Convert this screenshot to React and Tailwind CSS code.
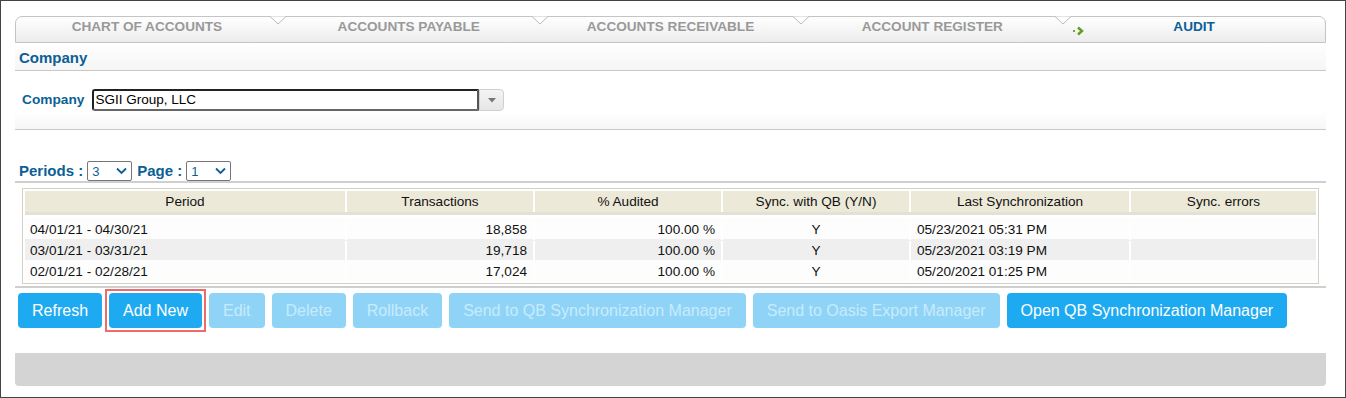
import React from 'react'

const TABS = ['Chart of Accounts', 'Accounts Payable', 'Accounts Receivable', 'Account Register', 'Audit']

const ROWS = [
  { period: '04/01/21 - 04/30/21', tx: '18,858', pct: '100.00 %', sync: 'Y', last: '05/23/2021 05:31 PM' },
  { period: '03/01/21 - 03/31/21', tx: '19,718', pct: '100.00 %', sync: 'Y', last: '05/23/2021 03:19 PM' },
  { period: '02/01/21 - 02/28/21', tx: '17,024', pct: '100.00 %', sync: 'Y', last: '05/20/2021 01:25 PM' },
]

const BUTTONS = [
  { label: 'Refresh', on: true },
  { label: 'Add New', on: true, marked: true },
  { label: 'Edit' },
  { label: 'Delete' },
  { label: 'Rollback' },
  { label: 'Send to QB Synchronization Manager' },
  { label: 'Send to Oasis Export Manager' },
  { label: 'Open QB Synchronization Manager', on: true },
]

const COLS = 'grid grid-cols-[320px_186px_186px_186px_218px_1fr] gap-x-[2px]'

function Notch() {
  // little V cut into the top edge between two tabs
  return (
    <svg className="absolute -right-[8px] -top-[1px]" width="16" height="10" viewBox="0 0 16 10">
      <path d="M0 0.5 L8 8 L16 0.5" fill="#ffffff" stroke="#b9b9b9" strokeWidth="1" />
    </svg>
  )
}

function Select({ value }) {
  return (
    <div className="w-[45px] h-[20px] border border-[#767676] rounded-[2px] bg-white flex items-center justify-between pl-[4px] pr-[4px] text-[13px] text-[#0b5f96]">
      <span className="mt-[2px]">{value}</span>
      <svg width="11" height="8" viewBox="0 0 11 8">
        <path d="M1 1.5 L5.5 6 L10 1.5" fill="none" stroke="#0b5f96" strokeWidth="1.8" />
      </svg>
    </div>
  )
}

export default function App() {
  return (
    <div className="w-[1346px] h-[398px] border border-[#444] bg-white box-border pl-[14px] pr-[19px] font-['Liberation_Sans',Arial,sans-serif]">
      {/* tab strip */}
      <div className="mt-[15px] h-[27px] flex border border-[#c4c4c4] rounded-t-[7px] bg-gradient-to-b from-white to-[#ececec]">
        {TABS.map((t, i) => {
          const last = i === TABS.length - 1
          return (
            <div key={t} className="relative flex-1 flex items-center justify-center pb-[4px]">
              {last && (
                <svg className="absolute left-[10px] top-[9px]" width="12" height="10" viewBox="0 0 12 10">
                  <rect x="0" y="4" width="2" height="2" fill="#6aa832" />
                  <path d="M5 1.5 L9 5 L5 8.5" fill="none" stroke="#5a9e22" strokeWidth="2.4" />
                </svg>
              )}
              <span className={`text-[13.6px] font-bold uppercase ${last ? 'text-[#0b5f96]' : 'text-[#999]'}`}>{t}</span>
              {!last && <Notch />}
            </div>
          )
        })}
      </div>

      {/* company section */}
      <div className="h-[28px] px-[4px] flex items-center border-b border-[#c8c8c8] bg-gradient-to-b from-white to-[#f5f5f5]">
        <span className="text-[15px] font-bold text-[#0b5f96] mt-[3px]">Company</span>
      </div>
      <div className="h-[59px] flex items-center pl-[7px] border-b border-[#c8c8c8] bg-gradient-to-b from-white from-70% to-[#f6f6f6]">
        <span className="text-[13.7px] font-bold text-[#0b5f96] mr-[8px]">Company</span>
        <div className="w-[387px] h-[22px] border-2 border-[#222] border-r-[#555] border-b-[#666] rounded-l-[3px] flex items-center pl-[1px] text-[13.5px] text-black">
          SGII Group, LLC
        </div>
        <div className="w-[25px] h-[22px] border border-[#d0d0d0] rounded-r-[4px] bg-gradient-to-b from-[#f4f4f4] to-[#e6e6e6] flex items-center justify-center">
          <svg width="8" height="5" viewBox="0 0 8 5"><path d="M0 0 L8 0 L4 4.5 Z" fill="#777" /></svg>
        </div>
      </div>

      {/* periods */}
      <div className="mt-[31px] h-[22px] flex items-center pl-[4px] gap-[4px] border-b-2 border-[#cfcfcf]">
        <span className="text-[15px] font-bold text-[#0b5f96]">Periods :</span>
        <Select value="3" />
        <span className="text-[15px] font-bold text-[#0b5f96] ml-[1px]">Page :</span>
        <Select value="1" />
      </div>

      {/* grid */}
      <div className="pt-[5px] px-[7px] pb-[2px] border-b-2 border-[#cfcfcf]">
        <div className="border border-[#d3d0c4] p-[2px] text-[13.6px] text-[#111]">
          <div className={`${COLS} h-[24px] border-b-[3px] border-[#e3e0d6]`}>
            {['Period', 'Transactions', '% Audited', 'Sync. with QB (Y/N)', 'Last Synchronization', 'Sync. errors'].map((h) => (
              <div key={h} className="bg-[#ece9d8] flex items-center justify-center pt-[1px]">{h}</div>
            ))}
          </div>
          <div className="pt-[3px]">
            {ROWS.map((r, i) => (
              <div key={r.period} className={`${COLS} h-[21px] pt-[2px] ${i === 1 ? 'bg-[#efefef]' : 'bg-[#fdfdfd]'}`}>
                <div className="flex items-center pl-[5px]">{r.period}</div>
                <div className="flex items-center justify-end pr-[6px] border-l-2 border-white -ml-[2px]">{r.tx}</div>
                <div className="flex items-center justify-end pr-[6px] border-l-2 border-white -ml-[2px]">{r.pct}</div>
                <div className="flex items-center justify-center border-l-2 border-white -ml-[2px]">{r.sync}</div>
                <div className="flex items-center pl-[6px] border-l-2 border-white -ml-[2px]">{r.last}</div>
                <div className="border-l-2 border-white -ml-[2px]" />
              </div>
            ))}
          </div>
        </div>
      </div>

      {/* actions */}
      <div className="mt-[5px] pl-[3px] flex items-center gap-[7px]">
        {BUTTONS.map((b) => (
          <div
            key={b.label}
            className={`relative h-[35px] px-[14px] rounded-[4px] flex items-center text-[16px] ${
              b.on ? 'bg-[#1eaaf1] text-white' : 'bg-[#8fd4f7] text-[#c8ebfc]'
            }`}
          >
            {b.label}
            {b.marked && <span className="absolute -inset-[4px] border-2 border-[#ee6b6b]" />}
          </div>
        ))}
      </div>

      <div className="mt-[25px] h-[33px] bg-[#d4d4d4] rounded-b-[4px]" />
    </div>
  )
}
